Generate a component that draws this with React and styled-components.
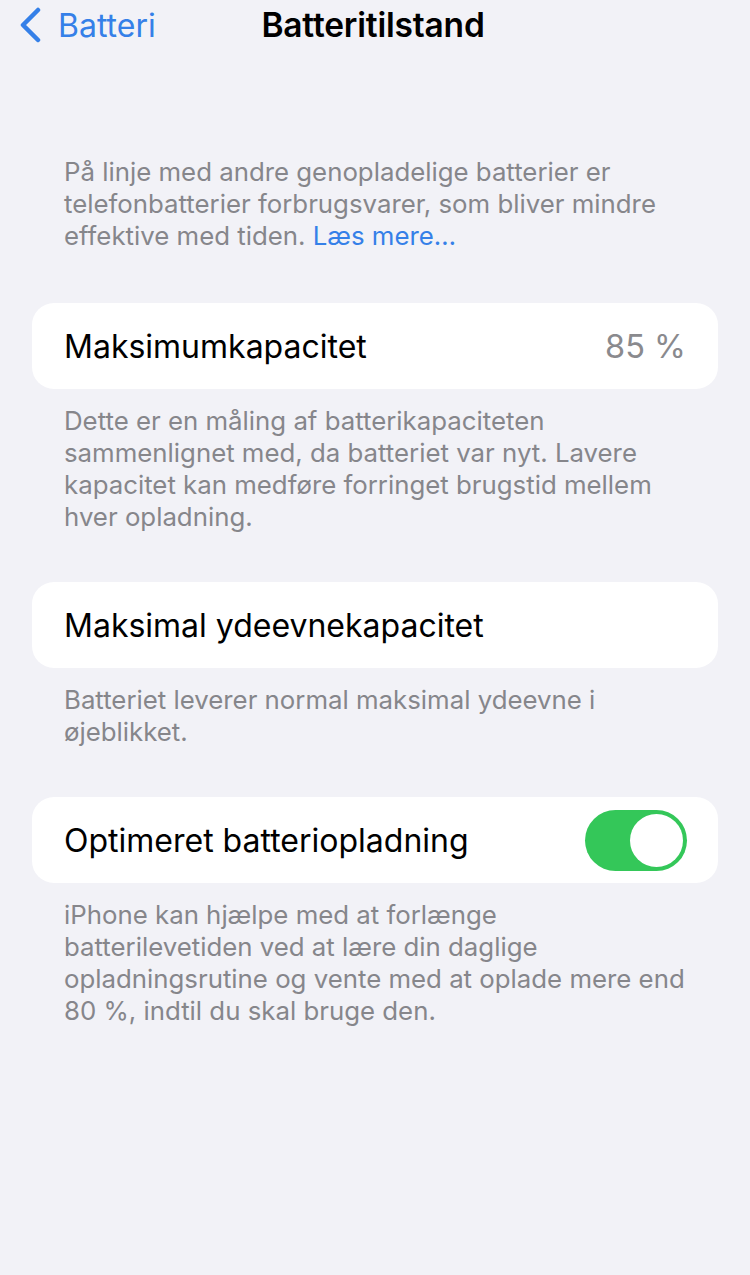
import styled, { createGlobalStyle } from "styled-components";

const Global = createGlobalStyle`
  html, body {
    margin: 0;
    padding: 0;
    background: #f2f2f7;
  }
  body {
    font-family: Inter, "Liberation Sans", sans-serif;
    -webkit-font-smoothing: antialiased;
  }
`;

const Page = styled.div`
  width: 750px;
  min-height: 1275px;
  background: #f2f2f7;
  display: flex;
  flex-direction: column;
`;

const NavBar = styled.header`
  height: 50px;
  display: grid;
  grid-template-columns: 1fr auto 1fr;
  align-items: center;
`;

const Back = styled.a`
  display: flex;
  align-items: center;
  gap: 16px;
  padding-left: 18px;
  color: #3580e8;
  font-size: 32px;
  text-decoration: none;
`;

const Title = styled.h1`
  margin: 0 0 0 -4px;
  font-size: 33.5px;
  font-weight: 600;
  letter-spacing: -0.2px;
  color: #000;
`;

const Content = styled.main`
  display: flex;
  flex-direction: column;
  padding: 106px 32px 0;
`;

const Note = styled.p`
  margin: 0 0 ${({ $after }) => $after}px;
  padding: 0 32px;
  font-size: 25.8px;
  line-height: 32px;
  color: #86868b;
`;

const More = styled.span`
  color: #3580e8;
`;

const Card = styled.div`
  height: 86px;
  background: #fff;
  border-radius: 22px;
  display: flex;
  align-items: center;
  justify-content: space-between;
  padding: 0 32px;
  margin-bottom: 16px;
`;

const Label = styled.span`
  font-size: 32px;
  color: #000;
`;

const Value = styled.span`
  font-size: 32.5px;
  color: #8a8a8e;
`;

const Toggle = styled.div`
  width: 102px;
  height: 61px;
  border-radius: 31px;
  background: #34c759;
  display: flex;
  align-items: center;
  justify-content: flex-end;
  padding: 4px;
  box-sizing: border-box;
  margin-right: -1px;
`;

const Knob = styled.div`
  width: 53px;
  height: 53px;
  border-radius: 50%;
  background: #fff;
`;

export default function App() {
  return (
    <Page>
      <Global />
      <NavBar>
        <Back href="#">
          <svg width="24" height="36" viewBox="0 0 24 36" fill="none">
            <path
              d="M20 3 L5 18 L20 33"
              stroke="#3580e8"
              strokeWidth="4.5"
              strokeLinecap="round"
              strokeLinejoin="round"
            />
          </svg>
          Batteri
        </Back>
        <Title>Batteritilstand</Title>
        <div />
      </NavBar>

      <Content>
        <Note $after={51}>
          På linje med andre genopladelige batterier er telefonbatterier
          forbrugsvarer, som bliver mindre effektive med tiden.{" "}
          <More>Læs mere…</More>
        </Note>

        <Card>
          <Label>Maksimumkapacitet</Label>
          <Value>85 %</Value>
        </Card>
        <Note $after={49}>
          Dette er en måling af batterikapaciteten sammenlignet med, da
          batteriet var nyt. Lavere kapacitet kan medføre forringet brugstid
          mellem hver opladning.
        </Note>

        <Card>
          <Label>Maksimal ydeevnekapacitet</Label>
        </Card>
        <Note $after={49}>
          Batteriet leverer normal maksimal ydeevne i øjeblikket.
        </Note>

        <Card>
          <Label>Optimeret batteriopladning</Label>
          <Toggle>
            <Knob />
          </Toggle>
        </Card>
        <Note $after={0}>
          iPhone kan hjælpe med at forlænge batterilevetiden ved at lære din
          daglige opladningsrutine og vente med at oplade mere end 80 %, indtil
          du skal bruge den.
        </Note>
      </Content>
    </Page>
  );
}
